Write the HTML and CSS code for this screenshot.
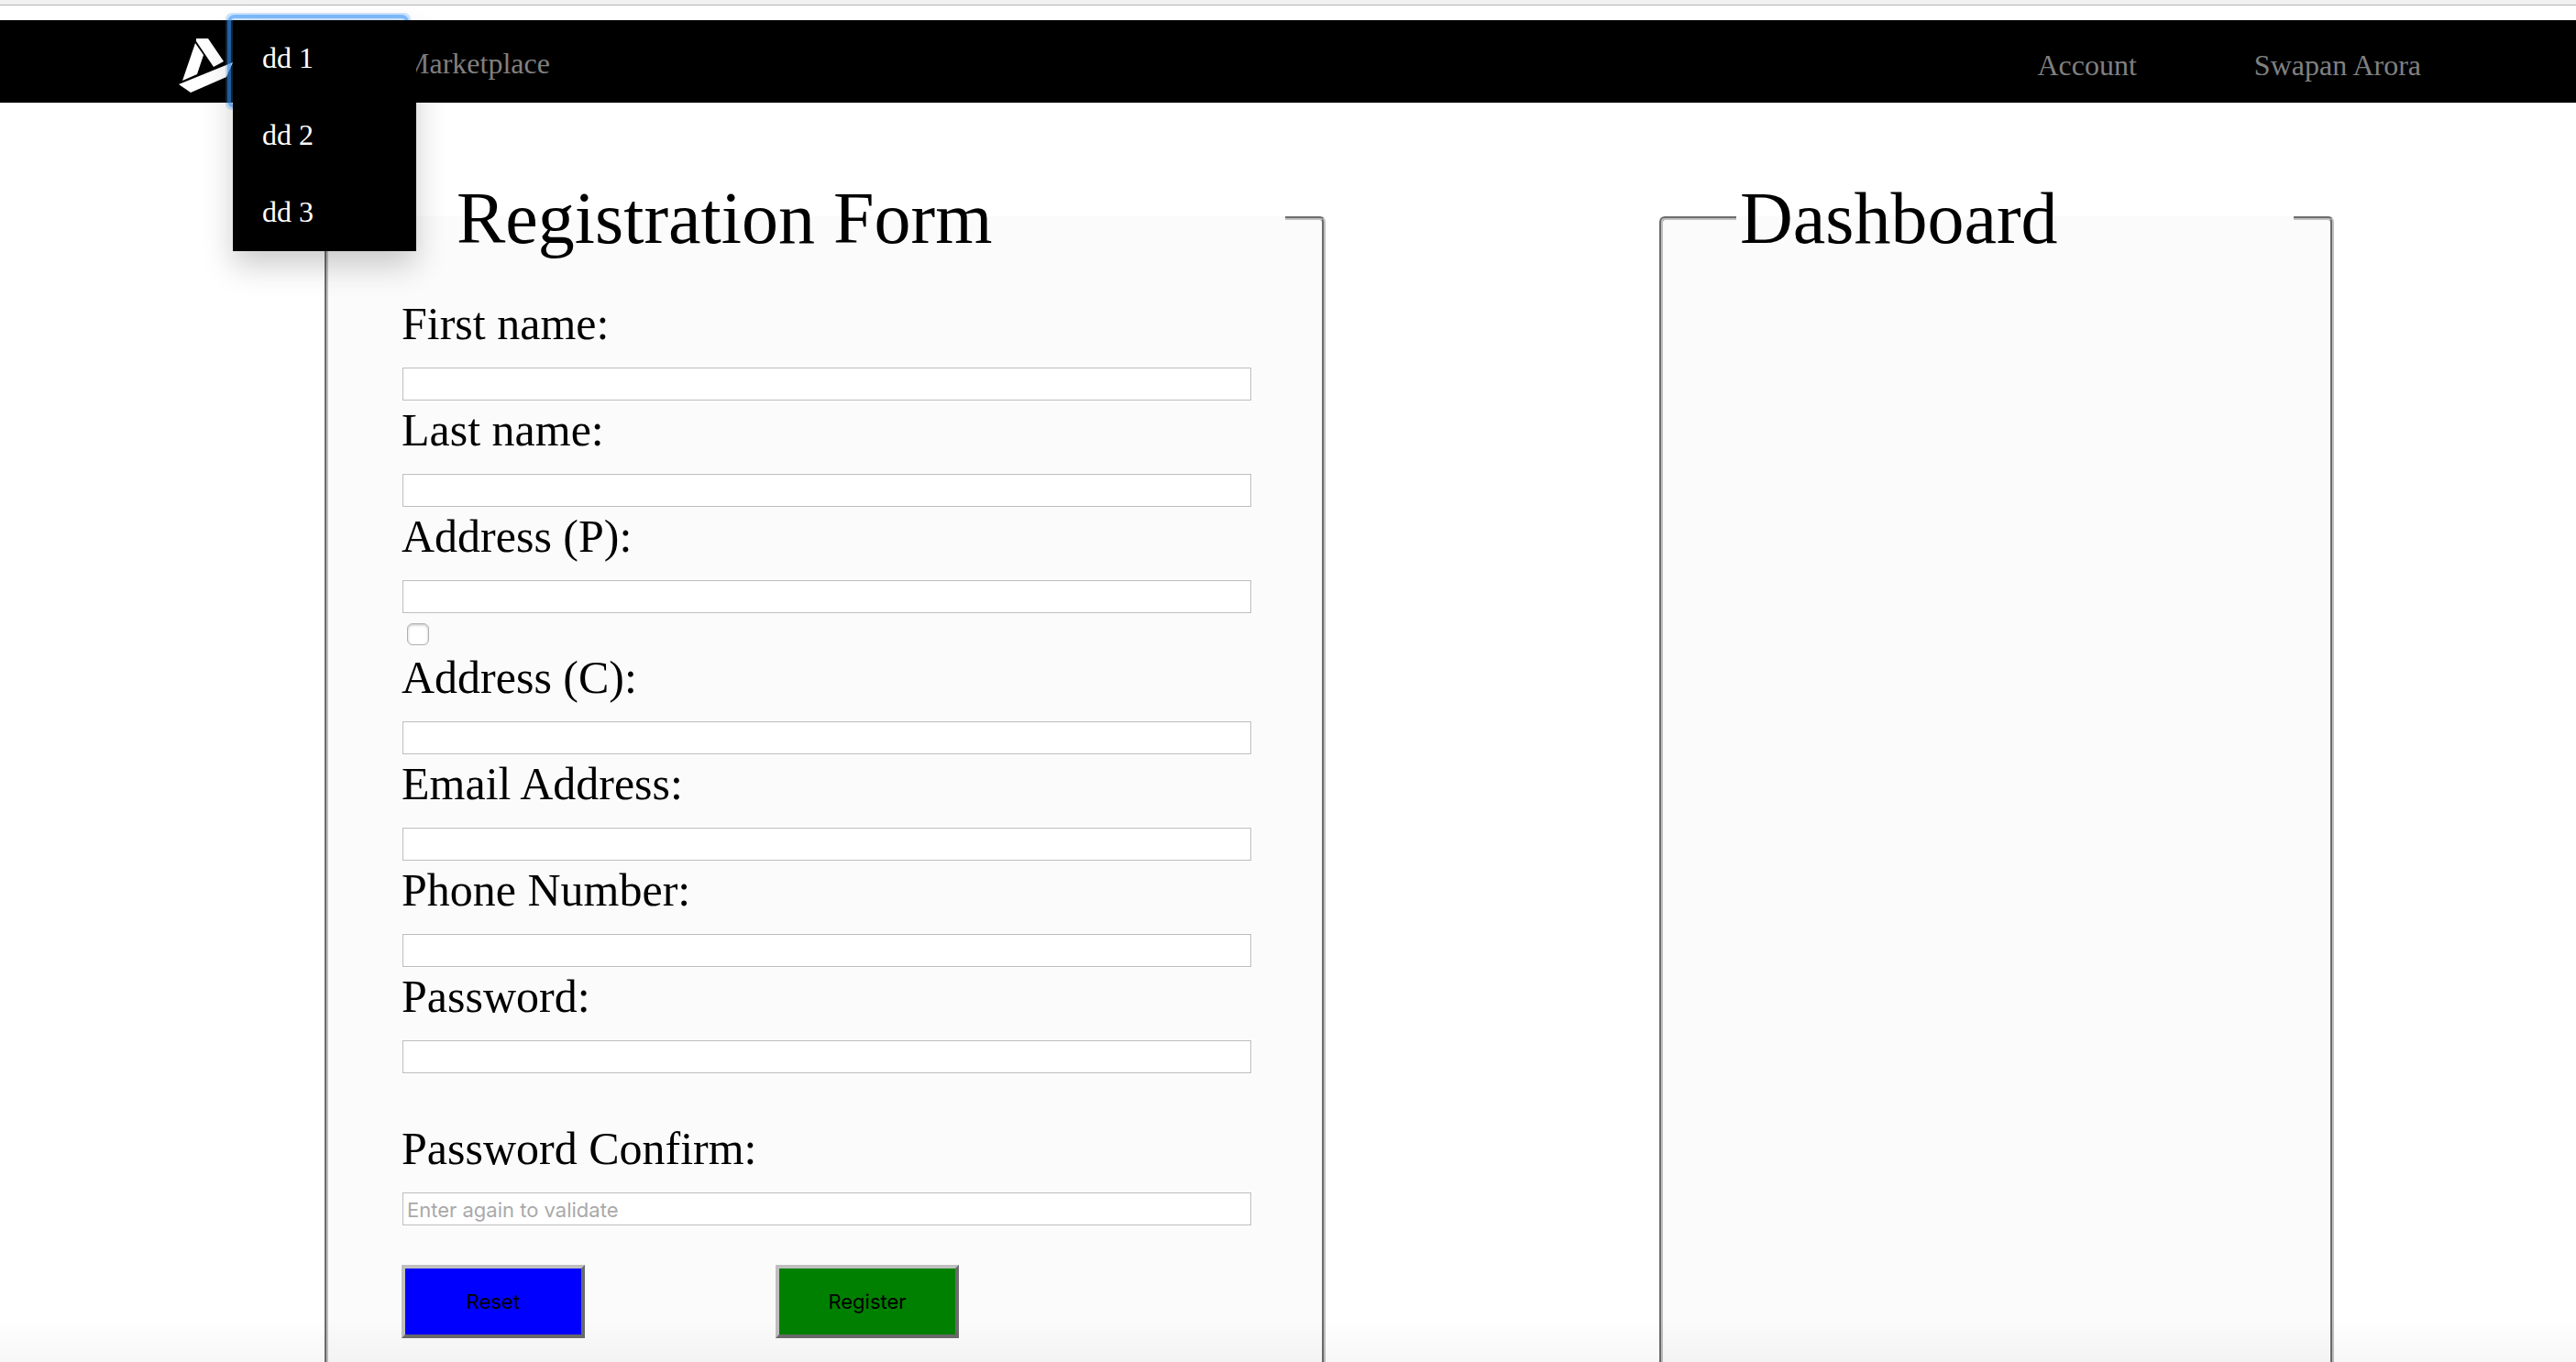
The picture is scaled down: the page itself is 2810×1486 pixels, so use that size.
FILE: index.html
```html
<!DOCTYPE html>
<html lang="en">
<head>
<meta charset="utf-8">
<title>Registration Form</title>
<link rel="stylesheet" href="styles.css">
</head>
<body>
<div class="top-strip"></div>
<nav class="navbar">
  <a class="brand" href="#" aria-label="Home">
    <svg class="brand-logo" viewBox="0 0 60 90" aria-hidden="true">
      <path d="M20 20H33L50 45L39 51L20 23Z"/>
      <path d="M19 25L28 38L21 59L5 66Z"/>
      <path d="M1 70L60 46L53 62L14 79Z"/>
    </svg>
  </a>
  <div class="dropdown">
    <button class="dropdown-toggle" type="button" aria-label="Menu" aria-expanded="true"></button>
    <div class="dropdown-menu">
      <a class="dropdown-item" href="#">dd 1</a>
      <a class="dropdown-item" href="#">dd 2</a>
      <a class="dropdown-item" href="#">dd 3</a>
    </div>
  </div>
  <a class="nav-link" href="#">Marketplace</a>
  <div class="nav-right">
    <a class="nav-link" href="#">Account</a>
    <a class="nav-link" href="#">Swapan Arora</a>
  </div>
</nav>
<main class="columns">
  <fieldset class="panel">
    <legend class="panel-title panel-title-indent">Registration Form</legend>
    <form class="form">
      <div class="field"><label for="first">First name:</label><input id="first" class="text-input" type="text"></div>
      <div class="field"><label for="last">Last name:</label><input id="last" class="text-input" type="text"></div>
      <div class="field"><label for="addr-p">Address (P):</label><input id="addr-p" class="text-input" type="text"></div>
      <div class="check-row"><input class="checkbox" type="checkbox" aria-label="Same address"></div>
      <div class="field"><label for="addr-c">Address (C):</label><input id="addr-c" class="text-input" type="text"></div>
      <div class="field"><label for="email">Email Address:</label><input id="email" class="text-input" type="email"></div>
      <div class="field"><label for="phone">Phone Number:</label><input id="phone" class="text-input" type="tel"></div>
      <div class="field"><label for="pass">Password:</label><input id="pass" class="text-input" type="password"></div>
      <div class="field field-spaced"><label for="confirm">Password Confirm:</label><input id="confirm" class="text-input" type="password" placeholder="Enter again to validate"></div>
      <div class="actions">
        <button class="button button-reset" type="reset">Reset</button>
        <button class="button button-register" type="submit">Register</button>
      </div>
    </form>
  </fieldset>
  <fieldset class="panel">
    <legend class="panel-title">Dashboard</legend>
  </fieldset>
</main>
<div class="bottom-shade"></div>
</body>
</html>
```
FILE: styles.css
```css
* { box-sizing: border-box; }

body {
  margin: 0;
  min-height: 100vh;
  background: #fff;
  color: #000;
  font-family: "Liberation Serif", "Times New Roman", serif;
}

.top-strip {
  height: 6px;
  margin-bottom: 16px;
  background: #f1f1f1;
  border-bottom: 1px solid #b3b3b3;
}

/* Navigation */
.navbar {
  display: flex;
  align-items: center;
  height: 90px;
  padding: 0 169px 0 194px;
  background: #000;
  font-size: 32px;
  line-height: 36px;
}

.brand,
.brand-logo {
  display: block;
  width: 60px;
  height: 90px;
}

.brand-logo { fill: #fff; }

.nav-link {
  padding-top: 4px;
  color: #808080;
  text-decoration: none;
}

.nav-right {
  display: flex;
  gap: 128px;
  margin-left: auto;
  padding-top: 4px;
}

.dropdown {
  position: relative;
  z-index: 1;
  width: 186px;
  height: 90px;
}

.dropdown-toggle {
  display: block;
  width: 100%;
  height: 100%;
  border: 0;
  border-radius: 2px;
  background: #000;
  outline: 4px solid rgba(59, 153, 252, 0.55);
  outline-offset: 2px;
  box-shadow: 0 0 0 8px rgba(59, 153, 252, 0.25);
}

.dropdown-menu {
  position: absolute;
  top: 0;
  left: 0;
  width: 200px;
  background: #000;
  box-shadow: 0 16px 32px rgba(0, 0, 0, 0.2);
}

.dropdown-item {
  display: block;
  padding: 23px 32px 25px;
  color: #fff;
  text-decoration: none;
}

/* Panels */
.columns {
  display: grid;
  grid-template-columns: 273fr 184fr;
  gap: 364px;
  padding: 80px 264px 0 354px;
}

.panel {
  min-width: 0;
  margin: 0;
  padding: 40px 40px 80px 80px;
  border: 4px groove #c0c0c0;
  border-radius: 6px;
  background: #fbfbfb;
}

.panel-title {
  width: 100%;
  padding: 0 4px;
  font-size: 80px;
  line-height: 92px;
}

.panel-title-indent { padding-left: 60px; }

/* Form */
.form {
  display: flex;
  flex-direction: column;
  gap: 2px;
  padding-right: 36px;
}

.field {
  display: flex;
  flex-direction: column;
  gap: 18px;
  font-size: 50px;
  line-height: 58px;
}

.field-spaced { margin-top: 50px; }

.text-input {
  height: 36px;
  margin: 1px;
  padding: 2px 4px 0;
  border: 1px solid #bcbcbc;
  border-radius: 0;
  background: #fff;
  box-shadow: 0 0 0 1px #fff;
  font: 22px Inter, sans-serif;
}

.text-input::placeholder { color: #a9a9a9; }

.check-row {
  height: 36px;
  padding: 8px 6px 4px;
}

.checkbox {
  display: block;
  appearance: none;
  width: 24px;
  height: 24px;
  margin: 0;
  border: 1px solid #b0b0b0;
  border-radius: 6px;
  background: #fff;
  box-shadow: inset 0 1px 3px rgba(0, 0, 0, 0.25);
}

.actions {
  display: flex;
  gap: 208px;
  padding-top: 40px;
}

.button {
  width: 200px;
  height: 80px;
  border: 4px solid;
  border-color: #bfbfbf #6b6b6b #6b6b6b #bfbfbf;
  color: #000;
  font: 22px Inter, sans-serif;
}

.button-reset { background: #00f; }
.button-register { background: #008000; }

.bottom-shade {
  position: fixed;
  inset: auto 0 0;
  height: 48px;
  background: linear-gradient(rgba(0, 0, 0, 0), rgba(0, 0, 0, 0.03));
  pointer-events: none;
}
```
